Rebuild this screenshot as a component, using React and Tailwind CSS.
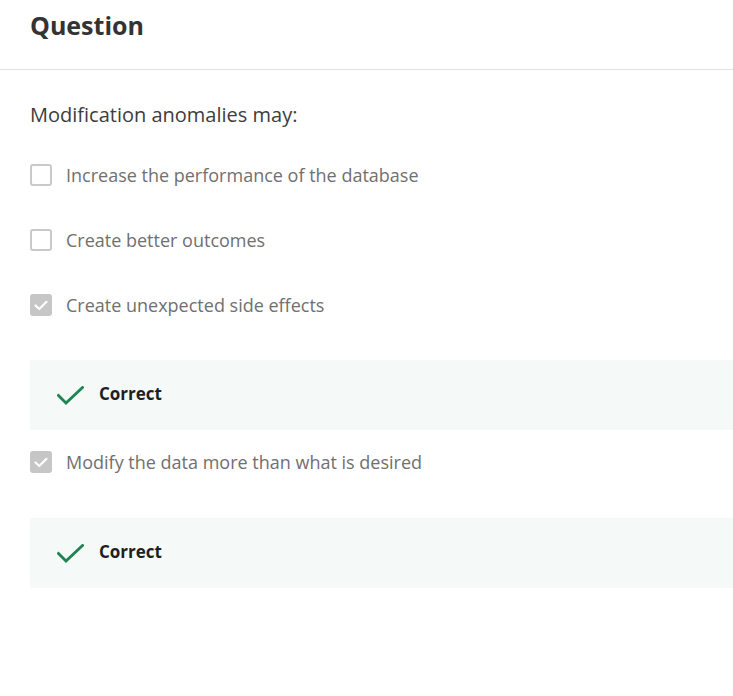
export default function App() {
  const font = { fontFamily: '"Open Sans", "Noto Sans", sans-serif' };
  const Box = ({ checked }) =>
    checked ? (
      <div className="w-[22px] h-[22px] rounded-[3px] bg-[#c6c6c6] flex items-center justify-center shrink-0">
        <svg width="14" height="11" viewBox="0 0 14 11" fill="none">
          <path d="M1.5 5.5 L5.3 9 L12.5 1.8" stroke="#fff" strokeWidth="2.2" strokeLinecap="round" strokeLinejoin="round" />
        </svg>
      </div>
    ) : (
      <div className="w-[22px] h-[22px] rounded-[3px] border-2 border-[#c9c9c9] bg-white shrink-0" />
    );
  const Option = ({ checked, children, className = "" }) => (
    <div className={"flex items-center gap-[14px] h-[24px] " + className}>
      <Box checked={checked} />
      <span className="text-[18px] leading-[24px] text-[#707070]">{children}</span>
    </div>
  );
  const Feedback = ({ className = "" }) => (
    <div className={"bg-[#f5f9f8] h-[70px] flex items-center pl-[27px] gap-[15px] " + className}>
      <svg width="27" height="19" viewBox="0 0 27 19" fill="none">
        <path d="M1.5 9.5 L9 17 L25.5 1.5" stroke="#1f8354" strokeWidth="2.8" strokeLinecap="square" />
      </svg>
      <span className="text-[17px] font-bold text-[#1f1f1f] leading-[24px] -mt-[2px]">Correct</span>
    </div>
  );
  return (
    <div className="w-[733px] h-[696px] bg-white overflow-hidden" style={font}>
      <div className="border-b border-[#e1e1e1] pl-[30px] pt-[9px] pb-[28px]">
        <h1 className="text-[25px] leading-[32px] font-bold text-[#333333]">Question</h1>
      </div>
      <div className="pl-[30px]">
        <p className="mt-[31px] text-[20px] leading-[27px] text-[#3d3d3d]">Modification anomalies may:</p>
        <Option className="mt-[35px]">Increase the performance of the database</Option>
        <Option className="mt-[41px]">Create better outcomes</Option>
        <Option checked className="mt-[41px]">Create unexpected side effects</Option>
        <Feedback className="mt-[43px]" />
        <Option checked className="mt-[20px]">Modify the data more than what is desired</Option>
        <Feedback className="mt-[44px]" />
      </div>
    </div>
  );
}
